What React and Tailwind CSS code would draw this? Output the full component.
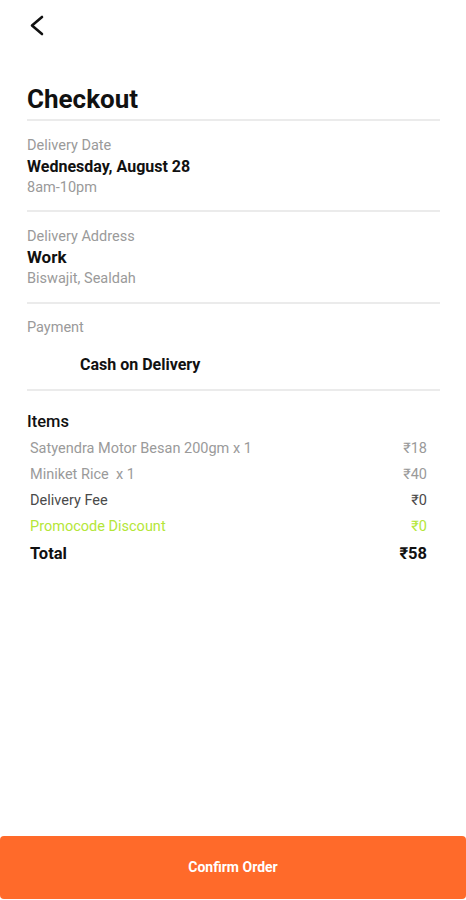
import React from "react";

function Divider() {
  return <div className="h-[2px] bg-[#ebebeb] mr-[26px]" />;
}

function Row({ label, value, cls }) {
  return (
    <div className={`flex justify-between items-center h-[26px] ${cls}`}>
      <span>{label}</span>
      <span>{value}</span>
    </div>
  );
}

export default function App() {
  return (
    <div
      className="h-screen w-full bg-white flex flex-col text-[#111]"
      style={{ fontFamily: "Roboto, 'Liberation Sans', sans-serif" }}
    >
      <div className="h-[50px] pl-[29px] pt-[15px]">
        <svg width="16" height="21" viewBox="0 0 16 21" fill="none">
          <polyline
            points="13,2 3,10.5 13,19"
            stroke="#111"
            strokeWidth="2.6"
            strokeLinecap="round"
            strokeLinejoin="round"
          />
        </svg>
      </div>

      <div className="pl-[27px]">
        <div className="h-[69px] flex items-end">
          <h1 className="text-[26px] leading-[32px] font-bold mb-[4px]">Checkout</h1>
        </div>
        <Divider />

        <div className="pt-[14px] pb-[12px]">
          <div className="text-[14.5px] leading-[21px] text-[#9a9a9a]">Delivery Date</div>
          <div className="text-[16px] leading-[21px] font-bold">Wednesday, August 28</div>
          <div className="text-[14.5px] leading-[21px] text-[#9a9a9a]">8am-10pm</div>
        </div>
        <Divider />

        <div className="pt-[14px] pb-[13px]">
          <div className="text-[14.5px] leading-[21px] text-[#9a9a9a]">Delivery Address</div>
          <div className="text-[17px] leading-[21px] font-bold">Work</div>
          <div className="text-[14.5px] leading-[21px] text-[#9a9a9a]">Biswajit, Sealdah</div>
        </div>
        <Divider />

        <div className="pt-[14px] pb-[14px]">
          <div className="text-[14.5px] leading-[20px] text-[#9a9a9a]">Payment</div>
          <div className="text-[16px] leading-[20px] font-bold pl-[53px] mt-[17px]">
            Cash on Delivery
          </div>
        </div>
        <Divider />

        <div className="pt-[21px]">
          <div className="text-[16.5px] leading-[20px] font-medium">Items</div>
          <div className="mt-[4px] pl-[3px] pr-[39px] text-[14.5px]">
            <Row label="Satyendra Motor Besan 200gm x 1" value="₹18" cls="text-[#9a9a9a]" />
            <Row label={"Miniket Rice\u00a0 x 1"} value="₹40" cls="text-[#9a9a9a]" />
            <Row label="Delivery Fee" value="₹0" cls="text-[#4a4a4a]" />
            <Row label="Promocode Discount" value="₹0" cls="text-[#b4e638]" />
            <Row label="Total" value="₹58" cls="text-[#111] font-bold text-[16.5px] h-[28px]" />
          </div>
        </div>
      </div>

      <div className="mt-auto mb-[1px] h-[63px] rounded-[4px] bg-[#ff6a2a] flex items-center justify-center">
        <span className="text-white text-[14px] font-bold">Confirm Order</span>
      </div>
    </div>
  );
}
